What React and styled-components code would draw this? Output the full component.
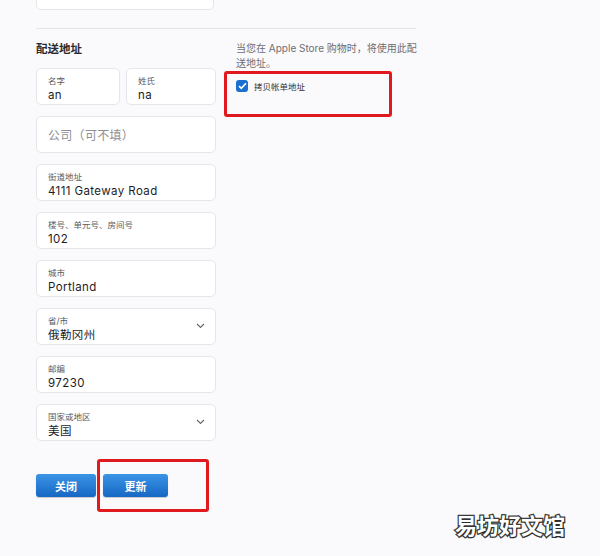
import React from "react";
import styled, { createGlobalStyle } from "styled-components";

const GlobalStyle = createGlobalStyle`
  html, body {
    margin: 0;
    padding: 0;
    background: #fafafc;
    font-family: "Inter", "Noto Sans CJK SC", sans-serif;
  }
`;

const Page = styled.div`
  width: 600px;
  height: 556px;
  overflow: hidden;
  background: #fafafc;
  position: relative;
`;

const Inner = styled.div`
  padding-left: 36px;
  width: 380px;
`;

const TopField = styled.div`
  width: 178px;
  height: 35px;
  margin-top: -25px;
  background: #fff;
  border: 1px solid #e6e6ea;
  border-radius: 5px;
  display: flex;
  align-items: flex-end;
  padding: 0 11px 9px;
  box-sizing: border-box;
  color: #8a8a90;
  font-size: 12px;
  letter-spacing: 0.5px;
  line-height: 1;
`;

const Divider = styled.div`
  height: 1px;
  background: #e4e4e8;
  margin-top: 18px;
`;

const Columns = styled.div`
  display: grid;
  grid-template-columns: 180px 180px;
  column-gap: 20px;
  margin-top: 13px;
`;

const Heading = styled.div`
  font-size: 11.5px;
  font-weight: 600;
  color: #2a2a2e;
  line-height: 14px;
  height: 14px;
`;

const Stack = styled.div`
  display: flex;
  flex-direction: column;
  gap: 11px;
  margin-top: 12px;
`;

const Row = styled.div`
  display: grid;
  grid-template-columns: 84px 90px;
  column-gap: 6px;
`;

const Field = styled.div`
  height: 37px;
  box-sizing: border-box;
  background: #fff;
  border: 1px solid #e6e6ea;
  border-radius: 5px;
  padding: 7px 11px 0;
  display: flex;
  flex-direction: ${(p) => (p.$placeholder ? "row" : "column")};
  align-items: ${(p) => (p.$placeholder ? "center" : "stretch")};
  position: relative;
  ${(p) => p.$placeholder && "padding-top: 0;"}
`;

const Label = styled.div`
  font-size: 8.5px;
  color: #5a5a60;
  line-height: 10px;
`;

const Value = styled.div`
  font-size: 11.5px;
  color: #1d1d1f;
  line-height: 15px;
  margin-top: 2px;
  letter-spacing: 0.4px;
`;

const Placeholder = styled.div`
  font-size: 12px;
  color: #8e8e93;
  letter-spacing: 0.3px;
`;

const Chevron = styled.svg`
  position: absolute;
  right: 10px;
  top: 14px;
  width: 9px;
  height: 6px;
`;

const Note = styled.div`
  font-size: 10px;
  color: #6e6e73;
  line-height: 15px;
  margin-top: -1px;
  white-space: nowrap;
`;

const Highlight = styled.div`
  border: 3px solid #e0191e;
  border-radius: 3px;
  margin: 0 0 0 -12px;
  width: 168px;
  height: 46px;
  box-sizing: border-box;
  padding: 6px 0 0 9px;
`;

const CheckRow = styled.label`
  display: flex;
  align-items: center;
  gap: 6px;
  font-size: 8.5px;
  color: #333;
`;

const Box = styled.span`
  width: 12px;
  height: 12px;
  border-radius: 3px;
  background: #1a70cf;
  display: inline-flex;
  align-items: center;
  justify-content: center;
`;

const Actions = styled.div`
  display: flex;
  align-items: center;
  gap: 7px;
  margin-top: 18px;
`;

const ButtonFrame = styled.div`
  border: 3px solid #e0191e;
  border-radius: 3px;
  margin-left: -6px;
  padding: 12px 0 12px 3px;
  width: 112px;
  box-sizing: border-box;
`;

const Button = styled.button`
  width: ${(p) => p.$w}px;
  height: 23px;
  border: none;
  border-radius: 3px;
  background: linear-gradient(#3b94e6, #1667c4);
  box-shadow: 0 1px 1px rgba(0, 0, 0, 0.2);
  color: #fff;
  font-family: "Noto Sans CJK SC", sans-serif;
  font-weight: 700;
  font-size: 11px;
  padding: 0;
  cursor: pointer;
`;

const Watermark = styled.div`
  position: absolute;
  left: 455px;
  top: 508px;
  font-family: "Noto Sans CJK SC", sans-serif;
  font-size: 22px;
  font-weight: 700;
  color: #fff;
  -webkit-text-stroke: 2.5px #3a3a3a;
  paint-order: stroke fill;
  text-shadow: 1px 1px 1px rgba(0, 0, 0, 0.3);
`;

const Arrow = () => (
  <Chevron viewBox="0 0 9 6">
    <path d="M1 1l3.5 3.5L8 1" fill="none" stroke="#666" strokeWidth="1.1" />
  </Chevron>
);

const TextField = ({ label, value, select }) => (
  <Field>
    <Label>{label}</Label>
    <Value>{value}</Value>
    {select && <Arrow />}
  </Field>
);

export default function App() {
  return (
    <Page>
      <GlobalStyle />
      <Inner>
        <TopField>5035108070</TopField>
        <Divider />
        <Columns>
          <div>
            <Heading>配送地址</Heading>
            <Stack>
              <Row>
                <TextField label="名字" value="an" />
                <TextField label="姓氏" value="na" />
              </Row>
              <Field $placeholder>
                <Placeholder>公司（可不填）</Placeholder>
              </Field>
              <TextField label="街道地址" value="4111  Gateway Road" />
              <TextField label="楼号、单元号、房间号" value="102" />
              <TextField label="城市" value="Portland" />
              <TextField label="省/市" value="俄勒冈州" select />
              <TextField label="邮编" value="97230" />
              <TextField label="国家或地区" value="美国" select />
            </Stack>
            <Actions>
              <Button $w={60}>关闭</Button>
              <ButtonFrame>
                <Button $w={65}>更新</Button>
              </ButtonFrame>
            </Actions>
          </div>
          <div>
            <Note>
              当您在 Apple Store 购物时，将使用此配
              <br />
              送地址。
            </Note>
            <Highlight>
              <CheckRow>
                <Box>
                  <svg width="9" height="8" viewBox="0 0 9 8">
                    <path d="M1 4.2l2.3 2.2L8 1.3" fill="none" stroke="#fff" strokeWidth="1.6" />
                  </svg>
                </Box>
                拷贝帐单地址
              </CheckRow>
            </Highlight>
          </div>
        </Columns>
      </Inner>
      <Watermark>易坊好文馆</Watermark>
    </Page>
  );
}
